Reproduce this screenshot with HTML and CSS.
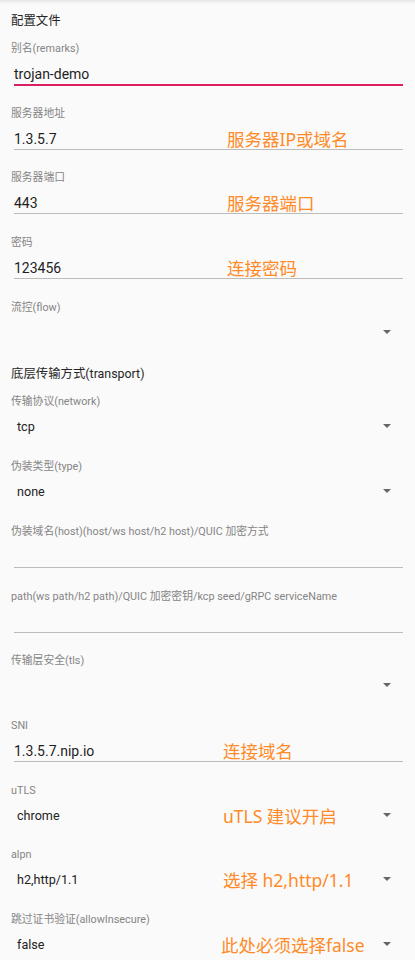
FILE: index.html
```html
<!DOCTYPE html>
<html lang="zh-CN">
<head>
<meta charset="utf-8">
<title>配置文件</title>
<link rel="stylesheet" href="styles.css">
</head>
<body>
<main class="form">
  <h2 class="section">配置文件</h2>

  <div class="field">
    <div class="label">别名(remarks)</div>
    <div class="edit focused"><span class="value">trojan-demo</span></div>
  </div>

  <div class="field">
    <div class="label">服务器地址</div>
    <div class="edit"><span class="value">1.3.5.7</span><span class="note">服务器IP或域名</span></div>
  </div>

  <div class="field">
    <div class="label">服务器端口</div>
    <div class="edit"><span class="value">443</span><span class="note">服务器端口</span></div>
  </div>

  <div class="field">
    <div class="label">密码</div>
    <div class="edit"><span class="value">123456</span><span class="note">连接密码</span></div>
  </div>

  <div class="field">
    <div class="label">流控(flow)</div>
    <div class="spinner"><span class="value"></span><span class="note"></span><span class="arrow"></span></div>
  </div>

  <h2 class="section">底层传输方式(transport)</h2>

  <div class="field">
    <div class="label">传输协议(network)</div>
    <div class="spinner"><span class="value">tcp</span><span class="note"></span><span class="arrow"></span></div>
  </div>

  <div class="field">
    <div class="label">伪装类型(type)</div>
    <div class="spinner"><span class="value">none</span><span class="note"></span><span class="arrow"></span></div>
  </div>

  <div class="field">
    <div class="label">伪装域名(host)(host/ws host/h2 host)/QUIC 加密方式</div>
    <div class="edit"><span class="value"></span></div>
  </div>

  <div class="field">
    <div class="label">path(ws path/h2 path)/QUIC 加密密钥/kcp seed/gRPC serviceName</div>
    <div class="edit"><span class="value"></span></div>
  </div>

  <div class="field">
    <div class="label">传输层安全(tls)</div>
    <div class="spinner"><span class="value"></span><span class="note"></span><span class="arrow"></span></div>
  </div>

  <div class="field">
    <div class="label">SNI</div>
    <div class="edit nx-low"><span class="value">1.3.5.7.nip.io</span><span class="note">连接域名</span></div>
  </div>

  <div class="field">
    <div class="label">uTLS</div>
    <div class="spinner"><span class="value">chrome</span><span class="note">uTLS 建议开启</span><span class="arrow"></span></div>
  </div>

  <div class="field">
    <div class="label">alpn</div>
    <div class="spinner"><span class="value">h2,http/1.1</span><span class="note">选择 h2,http/1.1</span><span class="arrow"></span></div>
  </div>

  <div class="field">
    <div class="label">跳过证书验证(allowInsecure)</div>
    <div class="spinner nx-last"><span class="value">false</span><span class="note">此处必须选择false</span><span class="arrow"></span></div>
  </div>
</main>
</body>
</html>
```
FILE: styles.css
```css
html {
  background: #fafafa linear-gradient(to bottom, #e6e6e6, #fafafa 4px) no-repeat;
}

body {
  margin: 0;
  font-family: Roboto, "Noto Sans CJK SC", sans-serif;
  color: #222;
  overflow: hidden;
}

.form {
  padding: 9px 12px 0 11px;
}

.section {
  margin: 0;
  height: 28px;
  padding-top: 2px;
  font-size: 12.4px;
  line-height: 20px;
  font-weight: 400;
  color: #262626;
}

.field {
  height: 64.7px;
}

.label {
  font-size: 10.8px;
  line-height: 16px;
  height: 16px;
  padding-top: 2px;
  color: #858585;
  white-space: nowrap;
}

.edit {
  margin: 6px 0 0 3px;
  height: 20px;
  padding-top: 1px;
  border-bottom: 1px solid #bcbcbc;
  display: grid;
  grid-template-columns: var(--nx, 213px) 1fr;
  align-items: center;
}

.edit.focused {
  border-bottom: 2px solid #dc1f63;
}

.edit .value {
  font-size: 14px;
  line-height: 20px;
  color: #1e1e1e;
}

.spinner {
  margin-top: 7px;
  height: 20px;
  padding: 0 12px 0 6px;
  display: grid;
  grid-template-columns: var(--nx, 206px) 1fr 8px;
  align-items: center;
}

.spinner .value {
  font-size: 12.6px;
  line-height: 20px;
  color: #222;
}

.nx-low {
  --nx: 209px;
}

.spinner.nx-last {
  --nx: 204px;
}

.note {
  font-family: "Noto Sans", "Noto Sans CJK SC", sans-serif;
  font-size: 17.5px;
  line-height: 20px;
  color: #ff8a28;
  white-space: nowrap;
}

.arrow {
  width: 0;
  height: 0;
  margin-top: -2px;
  border-left: 4px solid transparent;
  border-right: 4px solid transparent;
  border-top: 4px solid #666;
}
```
